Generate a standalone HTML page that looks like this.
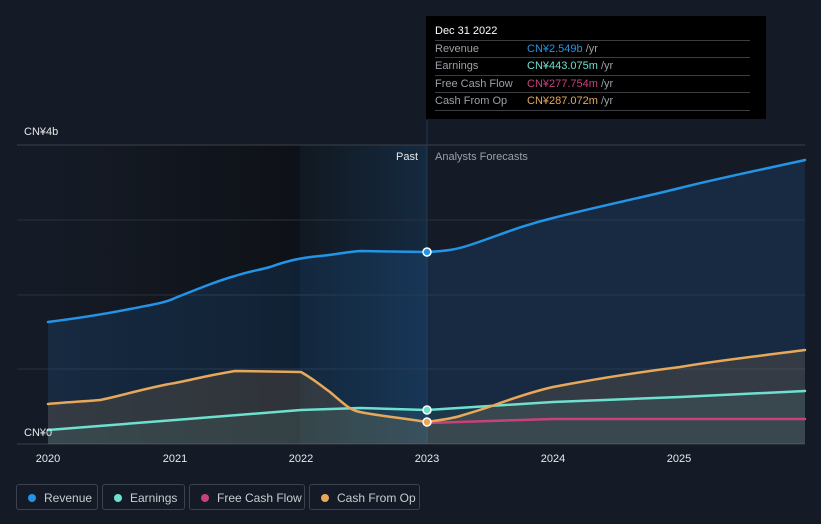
<!DOCTYPE html>
<html><head><meta charset="utf-8"><style>
body{margin:0;width:821px;height:524px;background:#151b26;font-family:"Liberation Sans","Noto Sans CJK SC",sans-serif;overflow:hidden;position:relative}
.tt{position:absolute;left:426px;top:16px;width:340px;height:103px;background:#000;color:#9aa0a6;font-size:11px}
.tt .h{position:absolute;left:9px;top:9px;color:#fff;font-size:11px}
.tt .r{position:absolute;left:9px;width:315px;height:17px;border-top:1px solid #3a3d42;line-height:17px}
.tt .r span{position:absolute;left:92px}
.leg{position:absolute;top:484px;height:26px;border:1px solid #3c4350;border-radius:3px;color:#c9ccd1;font-size:12px;line-height:26px;box-sizing:border-box;padding-left:27px}
.leg i{position:absolute;left:11px;top:9px;width:8px;height:8px;border-radius:50%}
</style></head><body>
<svg width="821" height="524" style="position:absolute;left:0;top:0">
<defs>
<linearGradient id="past" x1="0" x2="1"><stop offset="0" stop-color="#151b26"/><stop offset="1" stop-color="#0e1117"/></linearGradient>
<linearGradient id="band" x1="0" x2="1"><stop offset="0" stop-color="#111821"/><stop offset="1" stop-color="#152a40"/></linearGradient>
</defs>
<rect x="48" y="145" width="252" height="299" fill="url(#past)"/>
<rect x="300" y="145" width="127" height="299" fill="url(#band)"/>
<g stroke="#2a303b" stroke-width="1">
<line x1="17" y1="145" x2="805" y2="145" stroke="#3a404b"/><line x1="17" y1="220" x2="805" y2="220"/><line x1="17" y1="295" x2="805" y2="295"/><line x1="17" y1="369" x2="805" y2="369"/><line x1="17" y1="444" x2="805" y2="444" stroke="#3a404b"/>
</g>
<line x1="427" y1="120" x2="427" y2="444" stroke="#1f3a55" stroke-width="1"/>
<path d="M48,322 C80,318 100,315 130,309 C150,305 165,303 175,298 C200,288 220,280 235,276 C250,271 260,270 270,267 C290,260 300,258 320,256 C340,254 345,252 360,251 L427,252 C445,251 455,250 470,245 C500,235 520,226 553,218 C600,206 640,198 680,188 C720,178 760,170 805,160 L805,444 L48,444Z" fill="#1f6fbf" fill-opacity="0.18"/>
<path d="M48,404 C70,402 90,401 100,400 C120,396 150,387 175,383 C195,379 205,376 235,371 L301,372 C315,380 320,385 330,392 C345,405 350,410 360,412 C380,416 395,417 427,422 C440,420 450,419 460,416 C480,410 490,407 500,403 C520,396 535,391 553,387 C600,378 640,372 680,367 C720,360 760,356 805,350 L805,444 L48,444Z" fill="#e0a458" fill-opacity="0.15"/>
<path d="M48,430 L175,420 L301,410 L360,408 L427,410 L553,402 L680,397 L805,391 L805,444 L48,444Z" fill="#6ee0d0" fill-opacity="0.08"/>
<g fill="none" stroke-width="2.5" stroke-linecap="round">
<path d="M48,322 C80,318 100,315 130,309 C150,305 165,303 175,298 C200,288 220,280 235,276 C250,271 260,270 270,267 C290,260 300,258 320,256 C340,254 345,252 360,251 L427,252 C445,251 455,250 470,245 C500,235 520,226 553,218 C600,206 640,198 680,188 C720,178 760,170 805,160" stroke="#2394e6"/>
<path d="M48,430 L175,420 L301,410 L360,408 L427,410 L553,402 L680,397 L805,391" stroke="#6ee0d0"/>
<path d="M427,423 L553,419 L805,419" stroke="#c7427d"/>
<path d="M48,404 C70,402 90,401 100,400 C120,396 150,387 175,383 C195,379 205,376 235,371 L301,372 C315,380 320,385 330,392 C345,405 350,410 360,412 C380,416 395,417 427,422 C440,420 450,419 460,416 C480,410 490,407 500,403 C520,396 535,391 553,387 C600,378 640,372 680,367 C720,360 760,356 805,350" stroke="#e8a85a"/>
</g>
<circle cx="427" cy="252" r="4" fill="#2394e6" stroke="#fff" stroke-width="1.5"/>
<circle cx="427" cy="410" r="4" fill="#6ee0d0" stroke="#fff" stroke-width="1.5"/>
<circle cx="427" cy="422" r="4" fill="#e8a85a" stroke="#fff" stroke-width="1.5"/>
<g font-size="11" fill="#e6e8eb" font-family="Liberation Sans,sans-serif">
<text x="24" y="135">CN¥4b</text><text x="24" y="436">CN¥0</text>
<text x="396" y="160">Past</text>
<text x="435" y="160" fill="#9aa0a6">Analysts Forecasts</text>
<text x="48" y="462" text-anchor="middle">2020</text><text x="175" y="462" text-anchor="middle">2021</text><text x="301" y="462" text-anchor="middle">2022</text><text x="427" y="462" text-anchor="middle">2023</text><text x="553" y="462" text-anchor="middle">2024</text><text x="679" y="462" text-anchor="middle">2025</text>
</g>
</svg>
<div class="tt"><div class="h">Dec 31 2022</div>
<div class="r" style="top:24px">Revenue<span><b style="font-weight:normal;color:#2394e6">CN¥2.549b</b> /yr</span></div>
<div class="r" style="top:41px">Earnings<span><b style="font-weight:normal;color:#6ee0d0">CN¥443.075m</b> /yr</span></div>
<div class="r" style="top:59px">Free Cash Flow<span><b style="font-weight:normal;color:#c7427d">CN¥277.754m</b> /yr</span></div>
<div class="r" style="top:76px;border-bottom:1px solid #3a3d42">Cash From Op<span><b style="font-weight:normal;color:#e8a85a">CN¥287.072m</b> /yr</span></div>
</div>
<div class="leg" style="left:16px;width:82px"><i style="background:#2394e6"></i>Revenue</div>
<div class="leg" style="left:102px;width:83px"><i style="background:#6ee0d0"></i>Earnings</div>
<div class="leg" style="left:189px;width:116px"><i style="background:#c7427d"></i>Free Cash Flow</div>
<div class="leg" style="left:309px;width:111px"><i style="background:#e8a85a"></i>Cash From Op</div>
</body></html>
